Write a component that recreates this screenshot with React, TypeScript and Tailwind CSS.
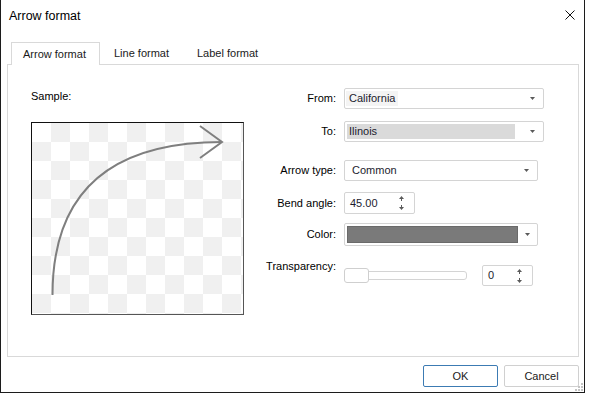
import React from "react";

const Caret = () => (
  <svg width="5" height="3" viewBox="0 0 5 3" className="block">
    <path d="M0 0h5L2.5 3z" fill="#5a5a5a" />
  </svg>
);

const SpinArrows = () => (
  <div className="flex flex-col items-center gap-[4px]">
    <svg width="5" height="5" viewBox="0 0 5 5" className="block">
      <path d="M2.5 0L5 3H0z" fill="#5a5a5a" />
      <rect x="2" y="3" width="1" height="2" fill="#5a5a5a" />
    </svg>
    <svg width="5" height="5" viewBox="0 0 5 5" className="block">
      <rect x="2" y="0" width="1" height="2" fill="#5a5a5a" />
      <path d="M0 2h5L2.5 5z" fill="#5a5a5a" />
    </svg>
  </div>
);

const Label = ({ children }: { children: React.ReactNode }) => (
  <div className="w-[77px] shrink-0 text-right pr-[1px] text-black">{children}</div>
);

export default function App() {
  return (
    <div
      className="w-[599px] h-[395px] bg-white text-[11px] leading-[13px] text-black"
      style={{ fontFamily: '"Liberation Sans", Arial, sans-serif' }}
    >
      <div className="relative w-[585px] h-[393px] border-l border-r border-b border-[#1c1c1c] bg-white flex flex-col">
        {/* Title bar */}
        <div className="h-[32px] flex items-center justify-between pl-[8px] pr-[9px]">
          <span className="text-[12.5px] leading-[15px]">Arrow format</span>
          <svg width="10" height="10" viewBox="0 0 10 10" className="block -mt-[2px]">
            <path d="M0.5 0.5L9.5 9.5M9.5 0.5L0.5 9.5" stroke="#111" strokeWidth="1" />
          </svg>
        </div>

        {/* Tabs */}
        <div className="mt-[10px] pl-[10px] flex items-end h-[23px] relative z-10">
          <div className="h-[23px] px-[11px] pr-[13px] border border-b-0 border-[#d9d9d9] bg-white flex items-center text-[#1a1a1a]">
            Arrow format
          </div>
          <div className="h-[23px] pl-[14px] pr-[14px] flex items-center text-[#1a1a1a]">Line format</div>
          <div className="h-[23px] pl-[14px] pr-[14px] flex items-center text-[#1a1a1a]">Label format</div>
        </div>

        {/* Panel */}
        <div className="-mt-px ml-[6px] mr-[5px] h-[293px] border border-[#d9d9d9] flex">
          {/* Left column */}
          <div className="w-[252px] shrink-0 pl-[23px] pt-[25px]">
            <div>Sample:</div>
            <div className="mt-[19px] w-[213px] h-[193px] border-t border-l border-[#111] border-r border-b border-r-[#555] border-b-[#555]">
              <svg width="211" height="191" viewBox="0 0 211 191" className="block">
                <defs>
                  <pattern id="ck" width="38" height="38" patternUnits="userSpaceOnUse">
                    <rect width="38" height="38" fill="#ffffff" />
                    <rect x="19" y="0" width="19" height="19" fill="#f0f0f0" />
                    <rect x="0" y="19" width="19" height="19" fill="#f0f0f0" />
                  </pattern>
                </defs>
                <rect width="211" height="191" fill="url(#ck)" />
                <path d="M20.5 172 Q20.5 19 190 19" stroke="#7f7f7f" strokeWidth="2" fill="none" />
                <path d="M168 3 L190 19 L168 35" stroke="#7f7f7f" strokeWidth="2" fill="none" />
              </svg>
            </div>
          </div>

          {/* Right column */}
          <div className="flex flex-col pt-[23px]">
            <div className="flex items-center gap-[7px]">
              <Label>From:</Label>
              <div className="w-[200px] h-[21px] border border-[#d4d4d4] rounded-[2px] flex items-center pl-[1px] pr-[8px] justify-between">
                <span className="bg-[#f4f4f4] h-[15px] px-[3px] flex items-center text-[#1c1c2e]">California</span>
                <Caret />
              </div>
            </div>

            <div className="flex items-center gap-[7px] mt-[12px]">
              <Label>To:</Label>
              <div className="w-[200px] h-[21px] border border-[#d4d4d4] rounded-[2px] flex items-center pl-[2px] pr-[8px] justify-between">
                <span className="bg-[#dadada] h-[15px] w-[168px] px-[2px] flex items-center text-[#1c1c2e]">Ilinois</span>
                <Caret />
              </div>
            </div>

            <div className="flex items-center gap-[7px] mt-[18px]">
              <Label>Arrow type:</Label>
              <div className="w-[194px] h-[21px] border border-[#d4d4d4] rounded-[2px] flex items-center pl-[7px] pr-[8px] justify-between">
                <span className="text-[#1c1c2e]">Common</span>
                <Caret />
              </div>
            </div>

            <div className="flex items-center gap-[7px] mt-[11px]">
              <Label>Bend angle:</Label>
              <div className="w-[71px] h-[22px] border border-[#d4d4d4] rounded-[2px] flex items-center pl-[5px] pr-[10px] justify-between">
                <span className="text-[#1c1c2e]">45.00</span>
                <SpinArrows />
              </div>
            </div>

            <div className="flex items-center gap-[7px] mt-[9px]">
              <Label>Color:</Label>
              <div className="w-[194px] h-[23px] border border-[#d4d4d4] rounded-[2px] flex items-center pl-[2px] pr-[7px] justify-between">
                <div className="w-[171px] h-[17px] bg-[#7a7a7a] border border-[#6a6a6a]" />
                <Caret />
              </div>
            </div>

            <div className="flex items-start gap-[7px] mt-[14px]">
              <Label>Transparency:</Label>
              <div className="flex items-center mt-[5px]">
                <div className="relative w-[123px] h-[21px] flex items-center">
                  <div className="w-[123px] h-[9px] border border-[#d4d4d4] rounded-[3px] bg-white" />
                  <div className="absolute left-0 top-[3px] w-[25px] h-[15px] border border-[#cfcfcf] rounded-[3px] bg-white" />
                </div>
                <div className="ml-[15px] w-[51px] h-[21px] border border-[#d4d4d4] rounded-[2px] flex items-center pl-[5px] pr-[10px] justify-between">
                  <span className="text-[#1c1c2e]">0</span>
                  <SpinArrows />
                </div>
              </div>
            </div>
          </div>
        </div>

        {/* Buttons */}
        <div className="mt-[8px] flex justify-end gap-[6px] pr-[5px]">
          <button className="w-[75px] h-[22px] border border-[#3c7bb3] rounded-[2px] bg-white flex items-center justify-center text-[#1a1a1a]">
            OK
          </button>
          <button className="w-[75px] h-[22px] border border-[#d0d0d0] rounded-[2px] bg-white flex items-center justify-center text-[#1a1a1a]">
            Cancel
          </button>
        </div>

        {/* Size grip */}
        <svg width="8" height="8" viewBox="0 0 8 8" className="absolute right-[1px] bottom-[1px] block">
          <rect x="6" y="0" width="2" height="2" fill="#c4c4c4" />
          <rect x="3" y="3" width="2" height="2" fill="#c4c4c4" />
          <rect x="6" y="3" width="2" height="2" fill="#c4c4c4" />
          <rect x="0" y="6" width="2" height="2" fill="#c4c4c4" />
          <rect x="3" y="6" width="2" height="2" fill="#c4c4c4" />
          <rect x="6" y="6" width="2" height="2" fill="#c4c4c4" />
        </svg>
      </div>
    </div>
  );
}
